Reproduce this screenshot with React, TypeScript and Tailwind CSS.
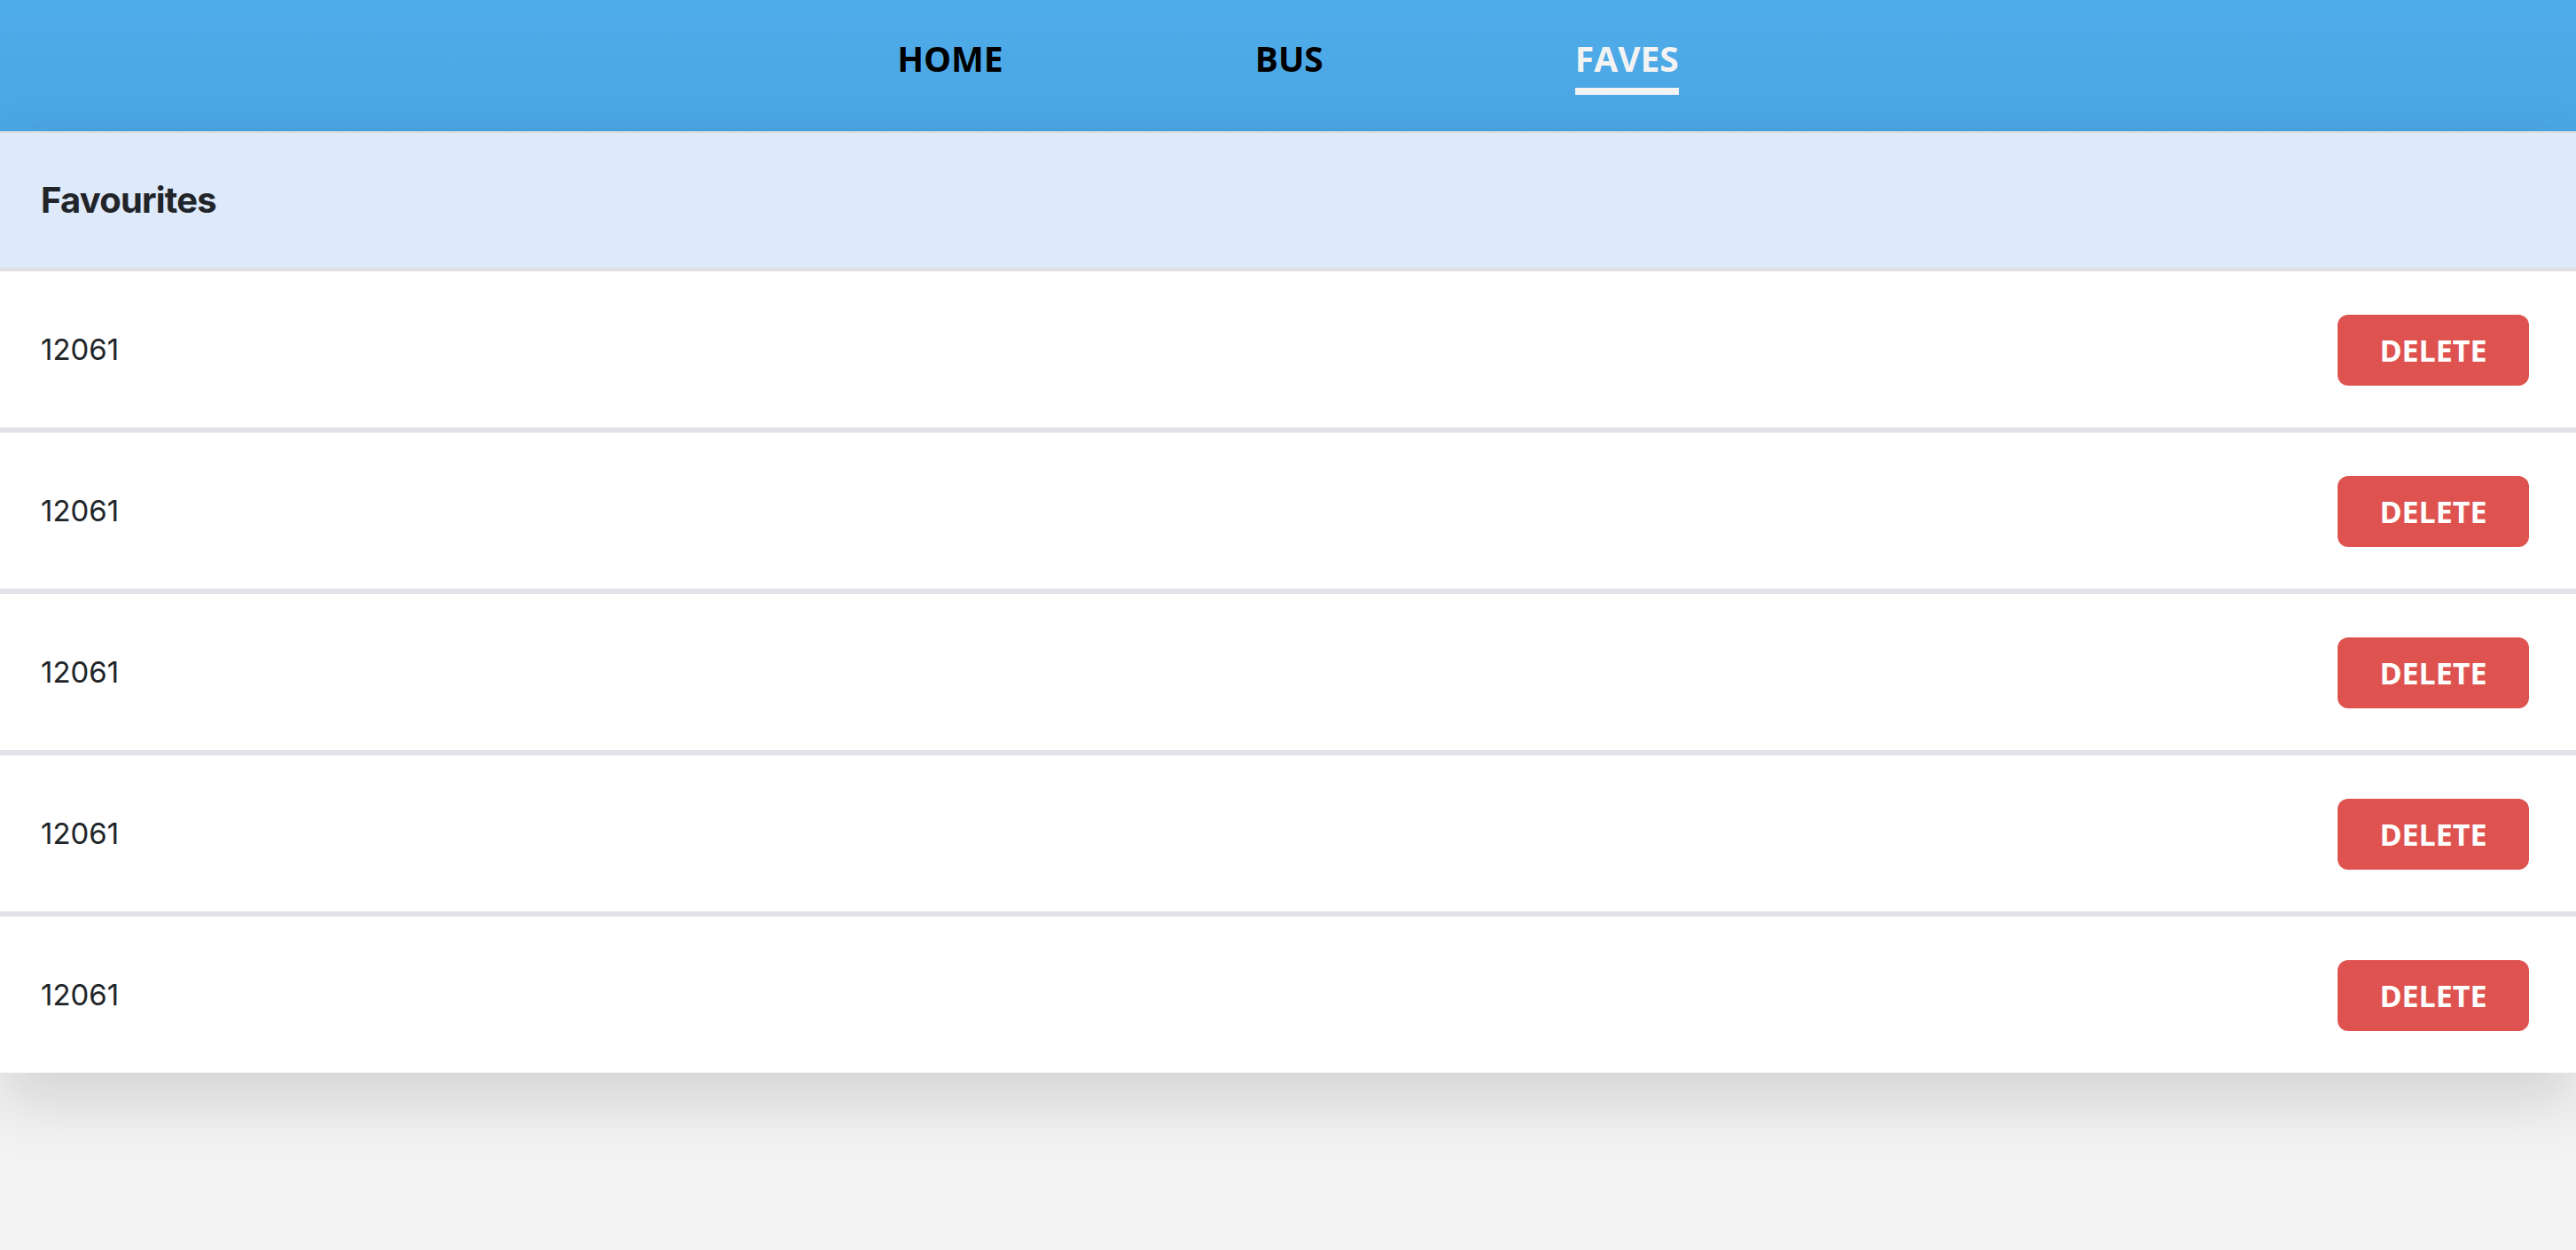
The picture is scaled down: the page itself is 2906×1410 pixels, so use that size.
import React from 'react';

const faves = ['12061', '12061', '12061', '12061', '12061'];

const NavLink = ({ label, active }: { label: string; active?: boolean }) => (
  <div className="flex flex-col items-stretch">
    <span
      className={`text-[39px] leading-none font-bold font-['Open_Sans',sans-serif] ${
        active ? 'text-[#f3f3f3]' : 'text-black'
      }`}
    >
      {label}
    </span>
    <span className={`mt-[14px] h-2 ${active ? 'bg-[#f3f3f3]' : 'bg-transparent'}`} />
  </div>
);

export default function App() {
  return (
    <div className="min-h-screen bg-[#f3f3f3] font-['Inter',sans-serif]">
      {/* Top nav */}
      <nav className="h-[148px] bg-gradient-to-b from-[#4facea] to-[#4ba6e2] flex justify-center items-start gap-[284px] pt-[46px]">
        <NavLink label="HOME" />
        <NavLink label="BUS" />
        <NavLink label="FAVES" active />
      </nav>

      <div className="shadow-[0_30px_70px_rgba(0,0,0,0.14)] border-t-2 border-[#dcdde0]">
        {/* Header */}
        <div className="h-[156px] bg-[#dee9fa] border-b-4 border-[#dfe0e4] flex items-center px-[46px]">
          <h1 className="text-[40px] font-bold tracking-[-0.8px] text-[#212529]">Favourites</h1>
        </div>

        {/* Rows */}
        {faves.map((stop, i) => (
          <div
            key={i}
            className={`bg-white flex items-center justify-between pl-[46px] pr-[53px] pt-[2px] ${
              i < faves.length - 1 ? 'h-[182px] border-b-[6px] border-[#e1e2e7]' : 'h-[176px]'
            }`}
          >
            <span className="text-[33px] text-[#212529]">{stop}</span>
            <button className="w-[216px] h-[80px] rounded-[12px] bg-[#de5350] text-white text-[34px] font-bold font-['Open_Sans',sans-serif] leading-none">
              DELETE
            </button>
          </div>
        ))}
      </div>
    </div>
  );
}
